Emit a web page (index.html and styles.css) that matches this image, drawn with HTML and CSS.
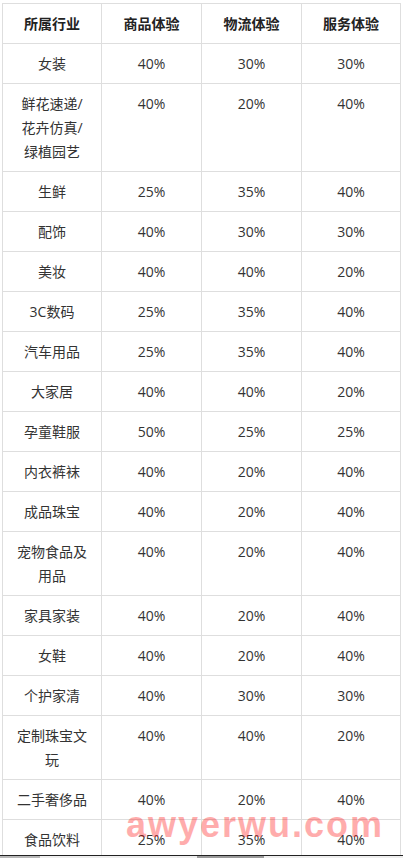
FILE: index.html
```html
<!DOCTYPE html>
<html lang="zh-CN">
<head>
<meta charset="utf-8">
<title>行业体验占比</title>
<link rel="stylesheet" href="styles.css">
</head>
<body>
<table class="rate-table">
  <colgroup>
    <col class="c1"><col class="c2"><col class="c3"><col class="c4">
  </colgroup>
  <thead>
    <tr><th>所属行业</th><th>商品体验</th><th>物流体验</th><th>服务体验</th></tr>
  </thead>
  <tbody>
    <tr><td>女装</td><td>40%</td><td>30%</td><td>30%</td></tr>
    <tr><td>鲜花速递/<br>花卉仿真/<br>绿植园艺</td><td>40%</td><td>20%</td><td>40%</td></tr>
    <tr><td>生鲜</td><td>25%</td><td>35%</td><td>40%</td></tr>
    <tr><td>配饰</td><td>40%</td><td>30%</td><td>30%</td></tr>
    <tr><td>美妆</td><td>40%</td><td>40%</td><td>20%</td></tr>
    <tr><td>3C数码</td><td>25%</td><td>35%</td><td>40%</td></tr>
    <tr><td>汽车用品</td><td>25%</td><td>35%</td><td>40%</td></tr>
    <tr><td>大家居</td><td>40%</td><td>40%</td><td>20%</td></tr>
    <tr><td>孕童鞋服</td><td>50%</td><td>25%</td><td>25%</td></tr>
    <tr><td>内衣裤袜</td><td>40%</td><td>20%</td><td>40%</td></tr>
    <tr><td>成品珠宝</td><td>40%</td><td>20%</td><td>40%</td></tr>
    <tr><td>宠物食品及<br>用品</td><td>40%</td><td>20%</td><td>40%</td></tr>
    <tr><td>家具家装</td><td>40%</td><td>20%</td><td>40%</td></tr>
    <tr><td>女鞋</td><td>40%</td><td>20%</td><td>40%</td></tr>
    <tr><td>个护家清</td><td>40%</td><td>30%</td><td>30%</td></tr>
    <tr><td>定制珠宝文<br>玩</td><td>40%</td><td>40%</td><td>20%</td></tr>
    <tr><td>二手奢侈品</td><td>40%</td><td>20%</td><td>40%</td></tr>
    <tr><td>食品饮料</td><td>25%</td><td>35%</td><td>40%</td></tr>
  </tbody>
</table>
<div class="watermark">awyerwu.com</div>
<div class="bottom-bar"><span class="seg s1"></span><span class="seg s2"></span><span class="seg s3"></span><span class="seg s4"></span></div>
</body>
</html>
```
FILE: styles.css
```css
html, body {
  margin: 0;
  padding: 0;
  background: #fff;
}
body {
  font-family: "Open Sans", "Noto Sans CJK SC", sans-serif;
  font-size: 14px;
  color: #333;
  overflow: hidden;
}
.rate-table {
  margin: 3px 0 0 2px;
  border-collapse: collapse;
  table-layout: fixed;
  width: 398px;
}
.c1 { width: 99px; }
.c2 { width: 100px; }
.c3 { width: 100px; }
.c4 { width: 99px; }
.rate-table th,
.rate-table td {
  border: 1px solid #dedede;
  padding: 8px 4px 7px;
  line-height: 24px;
  text-align: center;
  vertical-align: top;
  white-space: nowrap;
}
.rate-table th {
  font-weight: bold;
  color: #222;
}
.watermark {
  position: absolute;
  left: 126px;
  top: 807px;
  font-family: "Liberation Sans", Arial, sans-serif;
  font-weight: bold;
  font-size: 36px;
  line-height: 36px;
  letter-spacing: 2px;
  color: #ff0000;
  opacity: 0.32;
  pointer-events: none;
}
.bottom-bar {
  position: fixed;
  left: 0;
  right: 0;
  bottom: 0;
  height: 2px;
  border-top: 1px solid #222;
  background: #f0f0f0;
  display: flex;
}
.seg { display: block; height: 2px; }
.s1 { width: 40px; background: #b8b8b8; }
.s2 { width: 157px; background: #eeeeee; }
.s3 { width: 67px; background: #9a9a9a; }
.s4 { flex: 1; background: #eeeeee; }
```
